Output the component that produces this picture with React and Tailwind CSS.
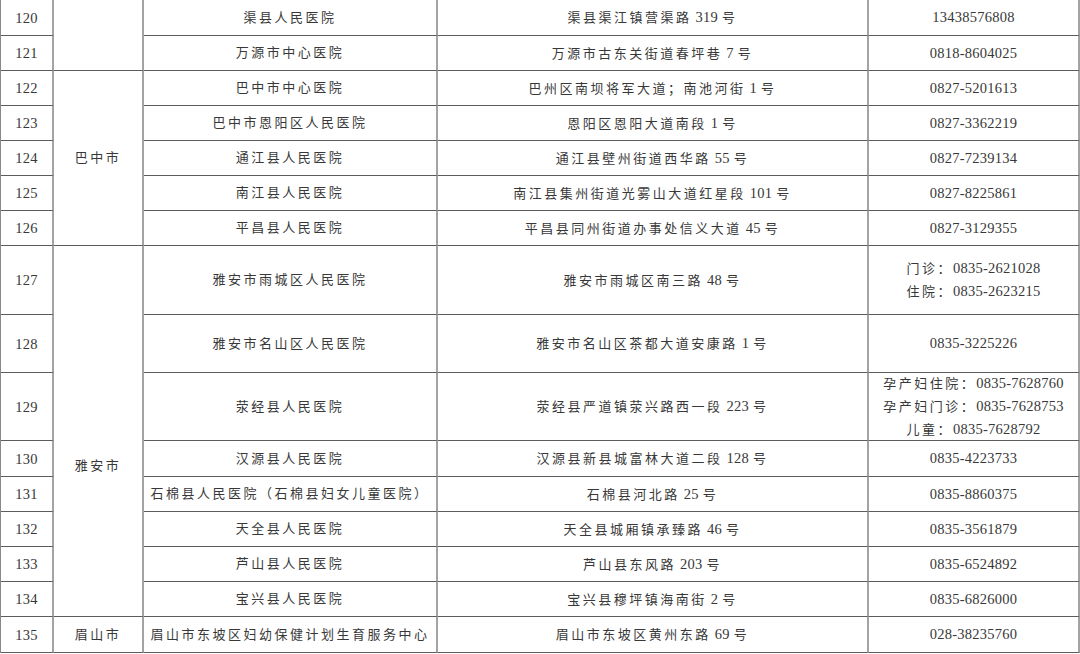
import React from 'react';

// rows of the hospital list, city cells are spliced in by span
const rows = [
  { no: '120', city: { name: '', span: 'row-span-2' }, hosp: '渠县人民医院', addr: '渠县渠江镇营渠路 319 号', tel: ['13438576808'] },
  { no: '121', hosp: '万源市中心医院', addr: '万源市古东关街道春坪巷 7 号', tel: ['0818-8604025'] },
  { no: '122', city: { name: '巴中市', span: 'row-span-5' }, hosp: '巴中市中心医院', addr: '巴州区南坝将军大道；南池河街 1 号', tel: ['0827-5201613'] },
  { no: '123', hosp: '巴中市恩阳区人民医院', addr: '恩阳区恩阳大道南段 1 号', tel: ['0827-3362219'] },
  { no: '124', hosp: '通江县人民医院', addr: '通江县壁州街道西华路 55 号', tel: ['0827-7239134'] },
  { no: '125', hosp: '南江县人民医院', addr: '南江县集州街道光雾山大道红星段 101 号', tel: ['0827-8225861'] },
  { no: '126', hosp: '平昌县人民医院', addr: '平昌县同州街道办事处信义大道 45 号', tel: ['0827-3129355'] },
  { no: '127', city: { name: '雅安市', span: 'row-span-8', pad: 'pt-[70px]' }, hosp: '雅安市雨城区人民医院', addr: '雅安市雨城区南三路 48 号', tel: ['门诊：0835-2621028', '住院：0835-2623215'] },
  { no: '128', hosp: '雅安市名山区人民医院', addr: '雅安市名山区茶都大道安康路 1 号', tel: ['0835-3225226'] },
  { no: '129', hosp: '荥经县人民医院', addr: '荥经县严道镇荥兴路西一段 223 号', tel: ['孕产妇住院：0835-7628760', '孕产妇门诊：0835-7628753', '儿童：0835-7628792'] },
  { no: '130', hosp: '汉源县人民医院', addr: '汉源县新县城富林大道二段 128 号', tel: ['0835-4223733'] },
  { no: '131', hosp: '石棉县人民医院（石棉县妇女儿童医院）', addr: '石棉县河北路 25 号', tel: ['0835-8860375'] },
  { no: '132', hosp: '天全县人民医院', addr: '天全县城厢镇承臻路 46 号', tel: ['0835-3561879'] },
  { no: '133', hosp: '芦山县人民医院', addr: '芦山县东风路 203 号', tel: ['0835-6524892'] },
  { no: '134', hosp: '宝兴县人民医院', addr: '宝兴县穆坪镇海南街 2 号', tel: ['0835-6826000'] },
  { no: '135', city: { name: '眉山市', span: 'row-span-1' }, hosp: '眉山市东坡区妇幼保健计划生育服务中心', addr: '眉山市东坡区黄州东路 69 号', tel: ['028-38235760'] },
];

// CJK gets wide tracking, latin digits are taller and tight
function T({ s }) {
  const parts = s.match(/[\u3000-\u9fff\uff00-\uffef]+|[^\u3000-\u9fff\uff00-\uffef]+/g) || [];
  return parts.map((p, i) =>
    /[\u3000-\u9fff\uff00-\uffef]/.test(p)
      ? <span key={i} className="tracking-[2.5px]">{p}</span>
      : <span key={i} className="text-[14.5px] tracking-[0.25px]">{p}</span>
  );
}

const cell = 'flex flex-col items-center justify-center text-center border-b border-b-[#5c5c5c] border-r-2 border-r-[#a3a3a3]';

export default function App() {
  return (
    <div className="w-[1080px] h-[654px] overflow-hidden bg-white">
      <div
        className="grid grid-cols-[53px_90px_294px_431px_1fr] grid-rows-[36px_35px_35px_35px_35px_35px_35px_69px_58px_68px_36px_35px_35px_35px_35px_36px] text-[13px] leading-[22px] text-[#383838] border-l border-l-[#888]"
        style={{ fontFamily: '"Liberation Serif", "Noto Sans CJK SC", serif' }}
      >
        {rows.map((r) => (
          <React.Fragment key={r.no}>
            <div className={cell}><T s={r.no} /></div>
            {r.city && (
              <div className={`${cell} ${r.city.span}`}>
                <div className={r.city.pad || ''}><T s={r.city.name} /></div>
              </div>
            )}
            <div className={cell}><div><T s={r.hosp} /></div></div>
            <div className={cell}><div><T s={r.addr} /></div></div>
            <div className={`${cell} border-r-0`}>
              {r.tel.map((t) => (
                <div key={t}><T s={t} /></div>
              ))}
            </div>
          </React.Fragment>
        ))}
      </div>
    </div>
  );
}
